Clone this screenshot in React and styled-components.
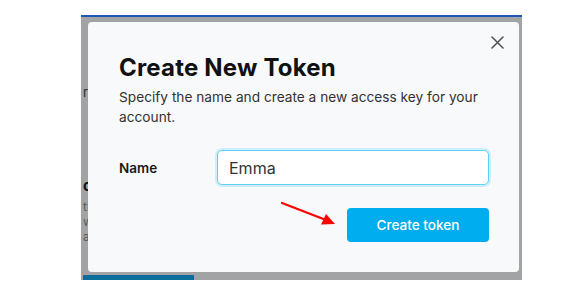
import React from "react";
import styled, { createGlobalStyle } from "styled-components";

const Global = createGlobalStyle`
  html, body { margin: 0; padding: 0; background: #ffffff; }
  body { font-family: Inter, "Noto Sans", Arial, sans-serif; }
  * { box-sizing: border-box; }
`;

const Page = styled.div`
  width: 580px;
  height: 295px;
  padding: 15px 0 0 81px;
  overflow: hidden;
`;

const Screen = styled.div`
  position: relative;
  width: 441px;
  height: 265px;
  background: #a2a3a4;
  border-top: 2px solid #1d56b4;
  overflow: hidden;
`;

const BackContent = styled.div`
  display: flex;
  flex-direction: column;
  padding: 68px 0 0 2px;
  height: 100%;
  color: #555;
`;

const BackText = styled.div`
  font-size: ${(p) => p.$size || 12}px;
  font-weight: ${(p) => p.$weight || 400};
  color: ${(p) => p.$color || "#5a5a5a"};
  line-height: ${(p) => p.$lh || 15}px;
  margin-top: ${(p) => p.$mt || 0}px;
  white-space: nowrap;
`;

const BottomBar = styled.div`
  margin-top: auto;
  width: 111px;
  height: 5px;
  background: #0b6e9c;
`;

const Modal = styled.div`
  position: absolute;
  left: 7px;
  top: 5px;
  width: 431px;
  height: 250px;
  background: #f8f9fb;
  border-radius: 4px;
  padding: 31px 30px 0 31px;
  display: flex;
  flex-direction: column;
`;

const Close = styled.button`
  position: absolute;
  top: 12px;
  right: 14px;
  width: 16px;
  height: 16px;
  padding: 0;
  border: 0;
  background: none;
  display: flex;
  align-items: center;
  justify-content: center;
  cursor: pointer;
`;

const Title = styled.h2`
  margin: 0;
  font-size: 24px;
  line-height: 30px;
  font-weight: 700;
  color: #111;
  letter-spacing: 0.2px;
`;

const Subtitle = styled.p`
  margin: 4px 0 0;
  font-size: 13.7px;
  line-height: 20px;
  color: #333;
`;

const FormRow = styled.div`
  display: flex;
  align-items: center;
  margin-top: 23px;
`;

const Label = styled.label`
  width: 99px;
  font-size: 13.5px;
  font-weight: 600;
  color: #1a1a1a;
`;

const Input = styled.input`
  flex: 1;
  height: 35px;
  border: 1px solid #5fd0fa;
  border-radius: 5px;
  background: #fff;
  box-shadow: 0 0 0 2px #cdeefc;
  padding: 0 11px;
  font-family: inherit;
  font-size: 16px;
  color: #333;
  outline: none;
`;

const Actions = styled.div`
  display: flex;
  justify-content: flex-end;
  margin-top: 23px;
`;

const PrimaryButton = styled.button`
  width: 142px;
  height: 34px;
  border: 0;
  border-radius: 4px;
  background: #00aeef;
  color: #fff;
  font-family: inherit;
  font-size: 13.6px;
  font-weight: 500;
  cursor: pointer;
`;

const Arrow = styled.svg`
  position: absolute;
  left: 199px;
  top: 183px;
`;

export default function App() {
  return (
    <>
      <Global />
      <Page>
        <Screen>
          <BackContent>
            <BackText $size={13} $color="#2a2a2a">r</BackText>
            <BackText $size={15} $weight={700} $color="#111" $mt={78}>c</BackText>
            <BackText $mt={6}>th</BackText>
            <BackText>w</BackText>
            <BackText>ar</BackText>
            <BottomBar />
          </BackContent>
          <Modal>
            <Close aria-label="Close">
              <svg width="13" height="13" viewBox="0 0 13 13">
                <path d="M1 1 L12 12 M12 1 L1 12" stroke="#555" strokeWidth="1.6" strokeLinecap="round" />
              </svg>
            </Close>
            <Title>Create New Token</Title>
            <Subtitle>
              Specify the name and create a new access key for your account.
            </Subtitle>
            <FormRow>
              <Label htmlFor="token-name">Name</Label>
              <Input id="token-name" defaultValue="Emma" />
            </FormRow>
            <Actions>
              <PrimaryButton>Create token</PrimaryButton>
            </Actions>
          </Modal>
          <Arrow width="60" height="30" viewBox="0 0 60 30">
            <path d="M2 3 L46 20" stroke="#ff0000" strokeWidth="2.2" strokeLinecap="round" />
            <path d="M55 24 L41 24.5 L46 14 Z" fill="#ff0000" />
          </Arrow>
        </Screen>
      </Page>
    </>
  );
}
